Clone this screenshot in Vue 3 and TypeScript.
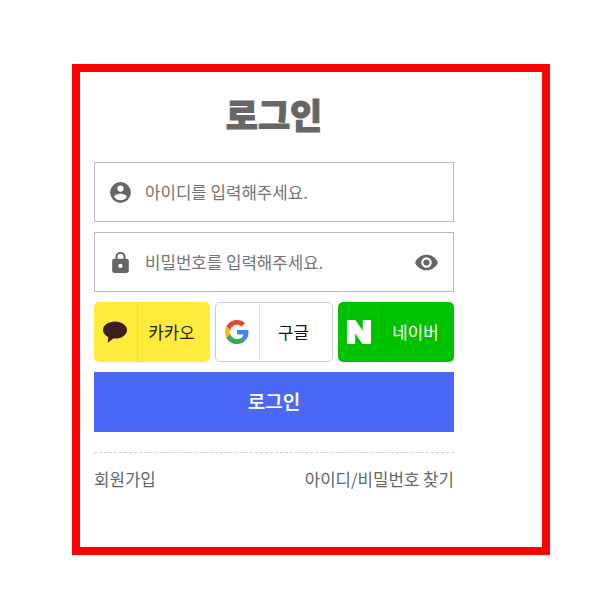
<script setup lang="ts">
</script>
<template>
  <div class="page">
    <div class="frame">
      <div class="panel">
        <h1 class="title">로그인</h1>
        <div class="field">
          <svg class="ico" viewBox="0 0 24 24" width="25" height="25"><path fill="#666" d="M12 2a10 10 0 1 0 0 20 10 10 0 0 0 0-20zm0 3.200a3 3 0 1 1 0 6 3 3 0 0 1 0-6zm0 14.200a7.400 7.400 0 0 1-6-3.100c.03-2 4-3.100 6-3.100s5.970 1.100 6 3.100a7.400 7.400 0 0 1-6 3.100z"/></svg>
          <span class="ph">아이디를 입력해주세요.</span>
        </div>
        <div class="field">
          <svg class="ico" viewBox="0 0 24 24" width="25" height="25"><path fill="#666" d="M18 8.500h-1.200V6.600a4.800 4.800 0 0 0-9.600 0v1.900H6a2 2 0 0 0-2 2V20a2 2 0 0 0 2 2h12a2 2 0 0 0 2-2v-9.500a2 2 0 0 0-2-2zm-6 8.800a2 2 0 1 1 0-4 2 2 0 0 1 0 4zm2.900-8.800H9.100V6.600a2.900 2.900 0 0 1 5.800 0v1.900z"/></svg>
          <span class="ph">비밀번호를 입력해주세요.</span>
          <svg class="eye" viewBox="0 0 24 24" width="25" height="25"><path fill="#666" d="M12 4.500C7 4.500 2.730 7.610 1 12c1.730 4.390 6 7.500 11 7.500s9.270-3.110 11-7.500c-1.730-4.390-6-7.500-11-7.500zM12 17a5 5 0 1 1 0-10 5 5 0 0 1 0 10zm0-8a3 3 0 1 0 0 6 3 3 0 0 0 0-6z"/></svg>
        </div>
        <div class="social">
          <button class="sbtn kakao">
            <span class="logo kakao-logo"><svg viewBox="0 0 24 22" width="24" height="22"><path fill="#3c1e1e" d="M12 .5C5.400.5 0 4.100 0 8.900c0 3 2.100 5.500 5.300 7l-.6 5c-.1.500.3.700.7.400l5-3.800c.6.100 1.100.1 1.600.1 6.600 0 12-3.900 12-8.700S18.600.500 12 .500z"/></svg></span>
            <span class="label">카카오</span>
          </button>
          <button class="sbtn google">
            <span class="logo google-logo"><svg viewBox="0 0 48 48" width="24" height="24"><path fill="#EA4335" d="M24 9.500c3.540 0 6.710 1.220 9.210 3.600l6.850-6.850C35.900 2.380 30.470 0 24 0 14.620 0 6.510 5.380 2.560 13.220l7.980 6.190C12.430 13.720 17.740 9.500 24 9.500z"/><path fill="#4285F4" d="M46.980 24.550c0-1.570-.15-3.090-.38-4.550H24v9.020h12.940c-.58 2.960-2.260 5.480-4.780 7.180l7.730 6c4.510-4.180 7.090-10.360 7.090-17.650z"/><path fill="#FBBC05" d="M10.530 28.590c-.48-1.450-.76-2.990-.76-4.590s.27-3.140.76-4.590l-7.980-6.190C.92 16.460 0 20.120 0 24c0 3.880.92 7.540 2.560 10.780l7.970-6.190z"/><path fill="#34A853" d="M24 48c6.480 0 11.930-2.130 15.890-5.810l-7.730-6c-2.150 1.450-4.920 2.300-8.160 2.300-6.260 0-11.570-4.220-13.470-9.910l-7.980 6.190C6.510 42.620 14.620 48 24 48z"/></svg></span>
            <span class="label">구글</span>
          </button>
          <button class="sbtn naver">
            <span class="logo naver-logo"><svg viewBox="0 0 24 24" width="24" height="24"><path fill="#fff" d="M0 0h8.500l7.300 10.800V0H24v24h-8.500L8.200 13.200V24H0z"/></svg></span>
            <span class="label">네이버</span>
          </button>
        </div>
        <button class="submit">로그인</button>
        <div class="links">
          <span class="join">회원가입</span>
          <span class="find">아이디/비밀번호 찾기</span>
        </div>
      </div>
    </div>
  </div>
</template>
<style>
html, body { margin: 0; background: #fff; }
</style>
<style scoped>
.page {
  width: 615px;
  height: 589px;
  padding: 64px 0 0 72px;
  box-sizing: border-box;
  overflow: hidden;
  font-family: "Noto Sans CJK KR", "Noto Sans", sans-serif;
}
.frame {
  width: 478px;
  height: 491px;
  border: 8px solid #f00;
  box-sizing: border-box;
  padding: 12px 14px 0;
}
.panel { width: 360px; display: flex; flex-direction: column; }
.title {
  margin: 0 0 18px;
  height: 60px;
  line-height: 60px;
  font-size: 35px;
  font-weight: 900;
  color: #666;
  -webkit-text-stroke: 1px #666;
  text-align: center;
}
.field {
  height: 60px;
  border: 1px solid #bbb;
  box-sizing: border-box;
  display: flex;
  align-items: center;
  padding: 0 14px 0 13px;
  margin-bottom: 10px;
}
.ico { margin-right: 12px; flex: none; }
.ph { font-size: 16.8px; color: #757575; flex: 1; }
.social { display: flex; gap: 5px; margin-bottom: 10px; }
.sbtn {
  flex: 1;
  height: 60px;
  padding: 0;
  border: 0;
  border-radius: 5px;
  display: flex;
  align-items: stretch;
  font-family: inherit;
  font-size: 16.800px;
  overflow: hidden;
  box-sizing: border-box;
}
.logo { width: 44px; box-sizing: border-box; padding-right: 1px; display: flex; align-items: center; justify-content: center; flex: none; }
.label { flex: 1; display: flex; align-items: center; justify-content: center; padding-right: 5px; }
.kakao { background: #ffeb3b; color: #222; }
.kakao-logo { border-right: 1px solid #f0dc30; }
.google { background: #fff; border: 1px solid #ccc; color: #111; }
.google-logo { border-right: 1px solid #e6e6e6; }
.naver { background: #00c300; color: #fff; }
.naver-logo { border-right: 1px solid #00b400; }
.submit {
  height: 60px;
  border: 0;
  padding: 0 0 3px;
  background: #4a67f5;
  color: #fff;
  font-family: inherit;
  font-size: 19px;
  font-weight: 500;
  -webkit-text-stroke: 0.2px #fff;
  margin-bottom: 20px;
}
.links {
  border-top: 1px dashed #ccc;
  padding-top: 14px;
  display: flex;
  justify-content: space-between;
  font-size: 16.800px;
  color: #666;
}
</style>
